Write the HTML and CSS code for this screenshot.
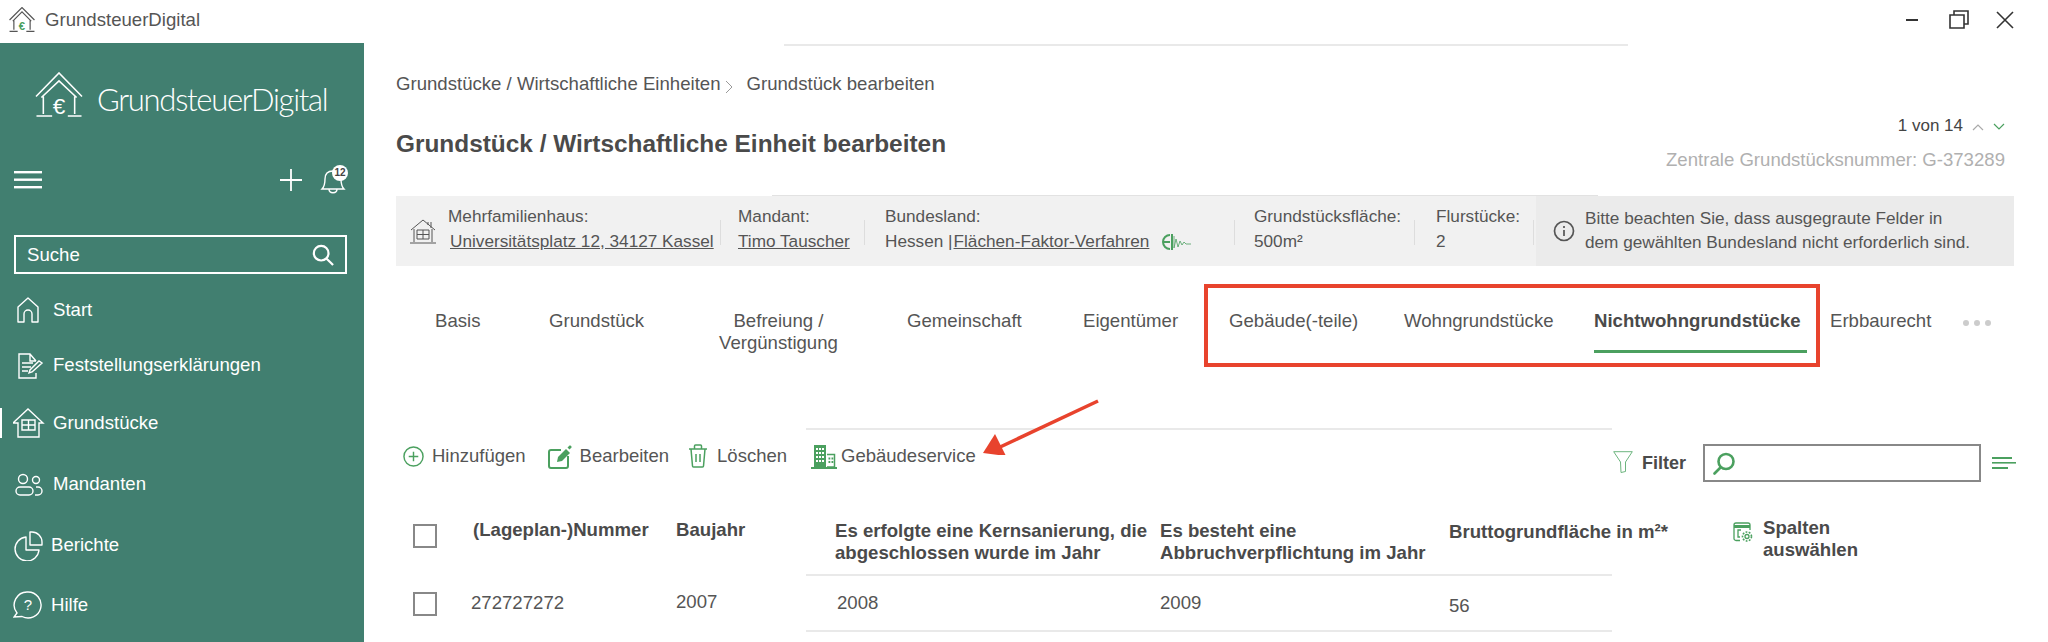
FILE: index.html
```html
<!DOCTYPE html>
<html lang="de">
<head>
<meta charset="utf-8">
<title>GrundsteuerDigital</title>
<link rel="stylesheet" href="styles.css">
</head>
<body>
<div class="app">
  <header class="titlebar">
    <div class="app-id">
      <svg class="app-logo" viewBox="0 0 48 48" fill="none" stroke="#555" stroke-width="2.2"><path d="M1 24 24 1l23 23M7 26 24 9l17 17M9 25v17M39 25v17M1 45h15M32 45h15"/><text x="24" y="42" class="app-euro" text-anchor="middle">€</text></svg>
      <span>GrundsteuerDigital</span>
    </div>
    <div class="win-controls">
      <svg class="win-min" viewBox="0 0 12 2"><rect width="12" height="2" fill="#333"/></svg>
      <svg class="win-max" viewBox="0 0 20 19" fill="none" stroke="#333" stroke-width="1.6"><path d="M1 5h14v13H1zM5 5V1h14v13h-4"/></svg>
      <svg class="win-close" viewBox="0 0 18 18" fill="none" stroke="#333" stroke-width="1.6"><path d="M1 1l16 16M17 1 1 17"/></svg>
    </div>
  </header>
  <div class="body">
    <aside class="sidebar">
      <div class="brand">
        <svg class="brand-icon" viewBox="0 0 48 48" fill="none" stroke="#fff" stroke-width="1.6"><path d="M0.5 25 24 1l23.5 24M6 26 24 9l18 17M8 25v18M40 25v18M1 45h16M33 45h14"/><text x="24" y="43" class="brand-euro" text-anchor="middle">€</text></svg>
        <span class="brand-name">GrundsteuerDigital</span>
      </div>
      <div class="tools">
        <svg class="burger" viewBox="0 0 28 18" fill="#fff"><rect width="28" height="2.4" y="0"/><rect width="28" height="2.4" y="7.5"/><rect width="28" height="2.4" y="15"/></svg>
        <div class="tools-right">
          <svg class="plus" viewBox="0 0 22 22" stroke="#fff" stroke-width="1.8"><path d="M11 0v22M0 11h22"/></svg>
          <div class="bell">
            <svg viewBox="0 0 26 28" fill="none" stroke="#fff" stroke-width="1.4"><path d="M2 23c3-3 3-6 3-10 0-5 3-8 8-8s8 3 8 8c0 4 0 7 3 10zM9 23c0 5 8 5 8 0"/></svg>
            <span class="badge">12</span>
          </div>
        </div>
      </div>
      <div class="search">
        <span>Suche</span>
        <svg viewBox="0 0 24 24" fill="none" stroke="#fff" stroke-width="2.4"><circle cx="10" cy="10" r="8"/><path d="m16 16 7 7"/></svg>
      </div>
      <nav class="nav">
        <a class="nav-item">
          <svg viewBox="0 0 32 32" fill="none" stroke="#fff" stroke-width="1.4"><path d="M5 28V13L15 4l10 9v15h-6v-8a3 3 0 0 0-8 0v8z" stroke-linejoin="round"/></svg>
          <span>Start</span>
        </a>
        <a class="nav-item">
          <svg viewBox="0 0 32 32" fill="none" stroke="#fff" stroke-width="1.4"><path d="M23 12 17 5H6v24h17v-5M17 5v7h6M9 14h11M9 18h9M9 22h6M19 23l10-9-3-2-9 9-1 3z"/></svg>
          <span>Feststellungserklärungen</span>
        </a>
        <a class="nav-item nav-active">
          <svg viewBox="0 0 32 32" fill="none" stroke="#fff" stroke-width="1.4"><path d="M0 16 15 2l15 14h-4v14H5V16zM9 13h13v10H9zM15.5 13v10M9 18h13"/></svg>
          <span>Grundstücke</span>
        </a>
        <a class="nav-item">
          <svg viewBox="0 0 32 32" fill="none" stroke="#fff" stroke-width="1.4"><circle cx="10" cy="11" r="4.5"/><circle cx="23" cy="12" r="3.5"/><rect x="3" y="19" width="17" height="8" rx="4"/><path d="M23 19h2a4 4 0 0 1 0 8h-3"/></svg>
          <span>Mandanten</span>
        </a>
        <a class="nav-item nav-tight">
          <svg viewBox="0 0 32 32" fill="none" stroke="#fff" stroke-width="1.4"><path d="M13 8A12 12 0 1 0 26 21H13zM17 3v13h12v-3a10 10 0 0 0-10-10z" stroke-linejoin="round"/></svg>
          <span>Berichte</span>
        </a>
        <a class="nav-item nav-tight">
          <svg viewBox="0 0 32 32" fill="none" stroke="#fff" stroke-width="1.4"><path d="M15 3a13 13 0 1 1-6 24.500L1 28l3-4A13 13 0 0 1 15 3z"/><text x="15" y="21" class="help-mark" text-anchor="middle">?</text></svg>
          <span>Hilfe</span>
        </a>
      </nav>
    </aside>

    <main class="main">
      <div class="rule rule-top"></div>
      <div class="crumbs">
        <span>Grundstücke / Wirtschaftliche Einheiten</span>
        <svg class="crumb-sep" viewBox="0 0 8 14" fill="none" stroke="#999" stroke-width="1"><path d="m1 1 6 6-6 6"/></svg>
        <span>Grundstück bearbeiten</span>
      </div>
      <div class="head">
        <h1>Grundstück / Wirtschaftliche Einheit bearbeiten</h1>
        <div class="head-right">
          <div class="pager">
            <span>1 von 14</span>
            <svg class="chev" viewBox="0 0 12 7" fill="none" stroke="#aaa" stroke-width="1.2"><path d="m1 6 5-5 5 5"/></svg>
            <svg class="chev" viewBox="0 0 12 7" fill="none" stroke="#4ba05f" stroke-width="1.2"><path d="m1 1 5 5 5-5"/></svg>
          </div>
          <div class="central">Zentrale Grundstücksnummer: G-373289</div>
        </div>
      </div>
      <div class="rule rule-info"></div>
      <section class="info">
        <svg class="info-house" viewBox="0 0 26 26" fill="none" stroke="#555" stroke-width="1"><path d="M1 12 13 2l12 10M4 11v13M22 11v13M0 25h26M7 12h12v9H7zM13 12v9M7 16.500h12M18 4v3M21 4v6"/></svg>
        <div class="fact fact-a">
          <div>Mehrfamilienhaus:</div>
          <a class="fact-link fact-link-in">Universitätsplatz 12, 34127 Kassel</a>
        </div>
        <div class="fact fact-b">
          <div>Mandant:</div>
          <a class="fact-link">Timo Tauscher</a>
        </div>
        <div class="fact fact-c">
          <div>Bundesland:</div>
          <div class="fact-line">Hessen |<a class="fact-link fact-link-gap">Flächen-Faktor-Verfahren</a>
            <svg class="wave" viewBox="0 0 30 18" fill="none" stroke="#4ba05f"><path d="M8 2a7 7 0 1 0 0 14M2 9h6M10 1v16" stroke-width="2"/><path d="M12 3v12l2-9 2 8 2-6 2 4 2-3 2 2h5" stroke-width="0.800"/></svg>
          </div>
        </div>
        <div class="fact fact-d">
          <div>Grundstücksfläche:</div>
          <div>500m²</div>
        </div>
        <div class="fact fact-e">
          <div>Flurstücke:</div>
          <div>2</div>
        </div>
        <div class="notice">
          <svg viewBox="0 0 22 22" fill="none" stroke="#555" stroke-width="1.700"><circle cx="11" cy="11" r="9.500"/><path d="M11 10v6M11 6v2"/></svg>
          <p>Bitte beachten Sie, dass ausgegraute Felder in<br>dem gewählten Bundesland nicht erforderlich sind.</p>
        </div>
      </section>
      <nav class="tabs">
        <a class="tab">Basis</a>
        <a class="tab">Grundstück</a>
        <a class="tab tab-wrap">Befreiung /<br>Vergünstigung</a>
        <a class="tab">Gemeinschaft</a>
        <a class="tab">Eigentümer</a>
        <a class="tab">Gebäude(-teile)</a>
        <a class="tab">Wohngrundstücke</a>
        <a class="tab tab-active">Nichtwohngrundstücke</a>
        <a class="tab">Erbbaurecht</a>
        <span class="more"><i></i><i></i><i></i></span>
      </nav>
      <div class="rule rule-table"></div>
      <div class="toolbar">
        <div class="actions">
          <a class="action act-add">
            <svg viewBox="0 0 22 22" fill="none" stroke="#4ba05f" stroke-width="1.500"><circle cx="11" cy="11" r="10"/><path d="M11 6v10M6 11h10"/></svg>
            <span>Hinzufügen</span>
          </a>
          <a class="action act-edit">
            <svg viewBox="0 0 24 25" fill="none" stroke="#4ba05f" stroke-width="2"><path d="M13 6H3a2 2 0 0 0-2 2v14a2 2 0 0 0 2 2h15a2 2 0 0 0 2-2V12"/><path d="m9 18 1-5 8-8 4 4-8 8z" fill="#4ba05f" stroke="none"/><path d="m19.500 3.500 1.800-1.800a1 1 0 0 1 1.400 0l.6.600a1 1 0 0 1 0 1.400l-1.800 1.800z" fill="#4ba05f" stroke="none"/></svg>
            <span>Bearbeiten</span>
          </a>
          <a class="action act-del">
            <svg viewBox="0 0 20 24" fill="none" stroke="#4ba05f" stroke-width="1.500" stroke-linejoin="round"><path d="M1 5h18M6.500 5V2a1 1 0 0 1 1-1h5a1 1 0 0 1 1 1v3M3 5l1.500 17a1 1 0 0 0 1 1h9a1 1 0 0 0 1-1L17 5M8 10v8M12 10v8"/></svg>
            <span>Löschen</span>
          </a>
          <a class="action act-bld">
            <svg viewBox="0 0 26 25" fill="none"><rect x="3" y="1" width="12" height="22" fill="#4ba05f"/><path d="M16 10.500h7.500V23H16" stroke="#4ba05f" stroke-width="1.500"/><path d="M0 24h26" stroke="#4ba05f" stroke-width="2"/><path d="M5 5h2M8 5h2M11 5h2M5 9h2M8 9h2M11 9h2M5 13h2M8 13h2M11 13h2M5 17h2M8 17h2M11 17h2" stroke="#fff" stroke-width="2"/><path d="M17.500 14.500h1.800M20.500 14.500h1.800M17.500 18h1.800M20.500 18h1.800" stroke="#4ba05f" stroke-width="1.800"/></svg>
            <span>Gebäudeservice</span>
          </a>
        </div>
        <div class="filter">
          <svg class="funnel" viewBox="0 0 20 22" fill="none" stroke="#6db57f" stroke-width="1"><path d="M.7.700h18.600L12.500 11v9.500l-4.500 1-.5-10.500z"/></svg>
          <strong>Filter</strong>
          <div class="filter-input">
            <svg viewBox="0 0 22 23" fill="none" stroke="#4ba05f" stroke-width="2.600"><circle cx="13" cy="9.500" r="7.500"/><path d="m7.500 15.500-6 6" stroke-linecap="round"/></svg>
          </div>
          <svg class="density" viewBox="0 0 24 12" fill="#4ba05f"><rect width="20" height="2"/><rect y="5" width="24" height="1.600"/><rect y="10" width="16" height="2"/></svg>
        </div>
      </div>
      <div class="table">
        <div class="row row-head">
          <span class="check check-head"></span>
          <div class="th th-a">(Lageplan-)Nummer</div>
          <div class="th th-a">Baujahr</div>
          <div class="th th-b">Es erfolgte eine Kernsanierung, die<br>abgeschlossen wurde im Jahr</div>
          <div class="th th-b">Es besteht eine<br>Abbruchverpflichtung im Jahr</div>
          <div class="th th-c">Bruttogrundfläche in m²*</div>
          <div class="th th-d">
            <svg viewBox="0 0 20 20" fill="none" stroke="#4ba05f" stroke-width="1.300"><path d="M7 18.500H3a2 2 0 0 1-2-2V3a2 2 0 0 1 2-2h12a2 2 0 0 1 2 2v5"/><path d="M1 4.500h16" stroke-width="3"/><path d="M8 8H5v7h2"/><circle cx="14" cy="14.500" r="2"/><circle cx="14" cy="14.500" r="4.500" stroke-dasharray="1.800 1.400" stroke-width="1.600"/></svg>
            <span>Spalten<br>auswählen</span>
          </div>
        </div>
        <div class="rule rule-table"></div>
        <div class="row row-body">
          <span class="check"></span>
          <div class="td td-num">272727272</div>
          <div class="td td-up">2007</div>
          <div class="td td-right">2008</div>
          <div class="td">2009</div>
          <div class="td td-down">56</div>
        </div>
        <div class="rule rule-table"></div>
      </div>
    </main>
  </div>
  <div class="annotation annotation-box"></div>
  <svg class="annotation annotation-arrow" viewBox="0 0 120 56"><path d="M116 2 16 49" stroke="#e8432d" stroke-width="3.500"/><path d="M1 54 13 35l11 22z" fill="#e8432d"/></svg>
</div>
</body>
</html>
```
FILE: styles.css
```css
* { box-sizing: border-box; }
html, body { margin: 0; height: 642px; overflow: hidden; background: #fff; }
body { font-family: "Liberation Sans", Arial, sans-serif; color: #555; font-size: 18.500px; }
a { color: inherit; text-decoration: none; }
svg { display: block; flex: none; }

.app { position: relative; width: 2048px; height: 642px; display: flex; flex-direction: column; }

/* title bar */
.titlebar { height: 43px; flex: none; display: flex; justify-content: space-between; align-items: center; padding: 0 34px 4px 8px; }
.app-id { display: flex; align-items: center; gap: 9px; font-size: 18.600px; color: #555; }
.app-logo { width: 28px; height: 26px; }
.app-euro { font: 700 21px "Liberation Sans", sans-serif; fill: #4ba05f; stroke: none; }
.win-controls { display: flex; align-items: center; }
.win-min { width: 12px; height: 2px; }
.win-max { width: 20px; height: 19px; margin-left: 31px; }
.win-close { width: 18px; height: 18px; margin-left: 27px; }

.body { flex: 1; display: flex; min-height: 0; }

/* sidebar */
.sidebar { width: 364px; flex: none; background: #417f70; color: #fff; display: flex; flex-direction: column; font-size: 18.600px; }
.brand { margin-top: 28px; padding-left: 35px; height: 48px; display: flex; align-items: flex-end; }
.brand-icon { width: 48px; height: 47px; }
.brand-euro { font: 400 23px "Liberation Sans", sans-serif; fill: #fff; stroke: none; }
.brand-name { margin-left: 14px; font-family: Lato, sans-serif; font-weight: 300; font-size: 31px; letter-spacing: -1.300px; line-height: 40px; color: #fff; }
.tools { margin-top: 47px; height: 28px; display: flex; justify-content: space-between; align-items: center; padding: 0 18px 0 14px; }
.burger { width: 28px; height: 18px; }
.tools-right { display: flex; align-items: center; }
.plus { width: 22px; height: 22px; }
.bell { position: relative; width: 26px; height: 28px; margin-left: 18px; }
.bell svg { width: 26px; height: 28px; }
.badge { position: absolute; top: -1px; right: -2px; width: 16px; height: 16px; border-radius: 50%; background: #fff; color: #444; font-size: 10px; font-weight: 700; line-height: 16px; text-align: center; }
.search { margin: 41px 17px 0 14px; height: 39px; border: 2px solid #fff; display: flex; align-items: center; justify-content: space-between; padding: 0 11px 0 11px; }
.search svg { width: 22px; height: 22px; }
.nav { margin-top: 16px; display: flex; flex-direction: column; }
.nav-item { position: relative; height: 40px; display: flex; align-items: center; padding-left: 13px; }
.nav-item svg { width: 32px; height: 32px; margin-right: 8px; }
.nav-item:nth-child(2) { margin-top: 15px; }
.nav-item:nth-child(3) { margin-top: 18px; }
.nav-item:nth-child(4) { margin-top: 21px; }
.nav-item:nth-child(5) { margin-top: 21px; }
.nav-item:nth-child(6) { margin-top: 20px; }
.nav-tight svg { margin-right: 6px; }
.nav-active::before { content: ""; position: absolute; left: 0; top: 5px; width: 2px; height: 30px; background: #fff; }
.help-mark { font: 400 15px "Liberation Sans", sans-serif; fill: #fff; stroke: none; }

/* main */
.main { flex: 1; min-width: 0; padding: 0 34px 0 32px; }
.rule { height: 2px; background: #e9e9e9; }
.rule-top { margin: 1px 0 0 388px; width: 844px; }
.rule-info { margin: 24px 0 0 376px; width: 826px; height: 1px; background: #e2e2e2; }
.rule-table { margin-left: 410px; width: 806px; }
.crumbs { margin-top: 27px; height: 22px; line-height: 22px; display: flex; align-items: center; font-size: 18.600px; }
.crumb-sep { width: 8px; height: 14px; margin: 6px 14px 0 4px; }
.head { margin-top: 20px; height: 56px; display: flex; justify-content: space-between; }
h1 { margin: 15px 0 0; font-size: 24.400px; line-height: 28px; color: #4a4a4a; font-weight: 700; }
.head-right { display: flex; flex-direction: column; align-items: flex-end; padding-right: 9px; }
.pager { height: 22px; display: flex; align-items: center; font-size: 17px; color: #444; }
.chev { width: 12px; height: 7px; margin-left: 9px; }
.chev:first-of-type { margin-top: 2px; }
.central { margin-top: 12px; line-height: 22px; font-size: 18.600px; color: #b0b0b0; }

/* info strip */
.info { height: 70px; background: #f1f1f1; display: flex; align-items: center; font-size: 17.200px; line-height: 25px; }
.info-house { width: 26px; height: 26px; margin: 0 12px 0 14px; }
.fact { height: 50px; position: relative; align-self: flex-start; margin-top: 8px; }
.fact::after { content: ""; position: absolute; top: 16px; bottom: 9px; right: 0; width: 1px; background: #ddd; }
.fact-a { width: 273px; }
.fact-b { width: 144px; padding-left: 17px; }
.fact-c { width: 370px; padding-left: 20px; }
.fact-d { width: 180px; padding-left: 19px; }
.fact-e { width: 119px; padding-left: 21px; }
.fact-link { text-decoration: underline; }
.fact-link-in { display: block; padding-left: 2px; }
.fact-link-gap { margin-left: 1px; }
.fact-line { display: flex; align-items: center; }
.wave { width: 30px; height: 18px; margin-left: 13px; }
.notice { flex: 1; align-self: stretch; margin-left: 2px; background: #ebebeb; display: flex; align-items: center; padding-left: 17px; gap: 10px; }
.notice svg { width: 22px; height: 22px; }
.notice p { margin: -3px 0 0; font-size: 17.200px; line-height: 24px; }

/* tabs */
.tabs { margin-top: 44px; height: 118px; display: grid; grid-template-columns: 114px 170px 188px 176px 146px 175px 190px 236px 133px 1fr; align-items: start; justify-items: start; padding-left: 39px; font-size: 18.600px; line-height: 22px; }
.tab { display: block; }
.tab-wrap { text-align: center; }
.tab-active { font-weight: 700; color: #4a4a4a; height: 43px; padding-right: 6px; border-bottom: 3px solid #4ba05f; }
.more { display: flex; gap: 5px; margin-top: 10px; }
.more i { width: 6px; height: 6px; border-radius: 50%; background: #ccc; }

/* toolbar */
.toolbar { margin-top: 14px; height: 38px; display: flex; justify-content: space-between; }
.actions { display: flex; height: 24px; font-size: 18.500px; line-height: 24px; }
.action { display: flex; align-items: center; }
.act-add { margin-left: 7px; }
.act-add svg { width: 21px; height: 21px; margin-right: 8px; }
.act-edit { margin-left: 22px; }
.act-edit svg { width: 24px; height: 25px; margin-right: 8px; }
.act-del { margin-left: 19px; }
.act-del svg { width: 20px; height: 24px; margin-right: 9px; }
.act-bld { margin-left: 24px; }
.act-bld svg { width: 26px; height: 25px; margin-right: 4px; }
.filter { display: flex; align-items: center; margin-right: -2px; }
.funnel { width: 20px; height: 22px; margin-top: -2px; }
.filter strong { margin: 0 17px 0 9px; font-size: 18px; color: #4a4a4a; }
.filter-input { width: 278px; height: 38px; border: 2px solid #888; display: flex; align-items: center; padding-left: 8px; }
.filter-input svg { width: 22px; height: 23px; }
.density { width: 24px; height: 12px; margin-left: 11px; }

/* table */
.table { margin-top: 34px; }
.row { display: grid; grid-template-columns: 60px 203px 159px 325px 289px 284px 1fr; padding-left: 17px; align-items: start; }
.row-head { height: 58px; }
.row-body { height: 54px; }
.check { display: block; width: 24px; height: 24px; border: 2px solid #888; }
.check-head { margin-top: 8px; }
.row-body .check { margin-top: 16px; }
.th { font-weight: 700; font-size: 18.600px; line-height: 21.500px; color: #4a4a4a; }
.th-a { margin-top: 3px; }
.th-b { margin-top: 4px; }
.th-c { margin-top: 5px; }
.th-d { display: flex; gap: 10px; margin-top: 1px; }
.th-d svg { width: 20px; height: 20px; margin-top: 5px; }
.td { margin-top: 16px; font-size: 18.600px; line-height: 22px; }
.td-num { margin-left: -2px; }
.td-up { margin-top: 15px; }
.td-right { margin-left: 2px; }
.td-down { margin-top: 19px; }

/* annotations drawn on top of the screenshot */
.annotation-box { position: absolute; left: 1204px; top: 284px; width: 616px; height: 83px; border: 4px solid #e8432d; }
.annotation-arrow { position: absolute; left: 982px; top: 399px; width: 120px; height: 56px; }
```
